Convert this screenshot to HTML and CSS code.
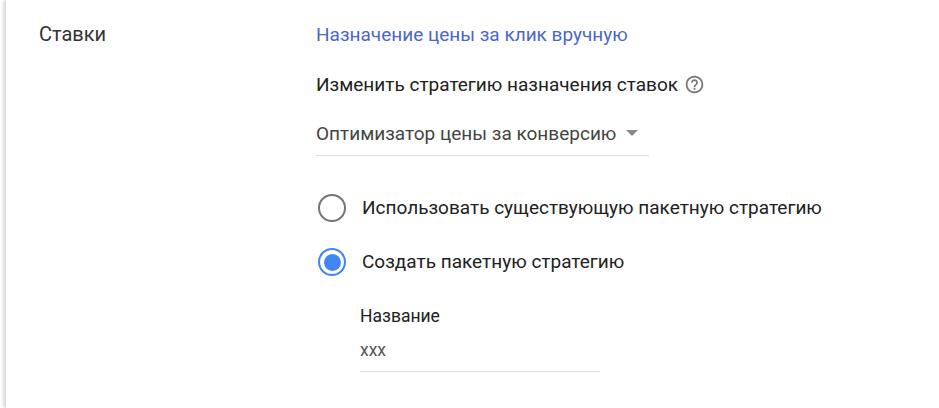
FILE: index.html
```html
<!DOCTYPE html>
<html lang="ru">
<head>
  <meta charset="UTF-8">
  <title>Ставки</title>
  <link rel="stylesheet" href="styles.css">
</head>
<body>
  <div class="page">
    <div class="section-title">Ставки</div>
    <div class="section-body">
      <a class="current-strategy">Назначение цены за клик вручную</a>

      <div class="change-row">
        <span>Изменить стратегию назначения ставок</span>
        <svg class="help-icon" width="21" height="21" viewBox="0 0 24 24">
          <path fill="#757575" d="M11 18h2v-2h-2v2zm1-16C6.48 2 2 6.48 2 12s4.48 10 10 10 10-4.48 10-10S17.52 2 12 2zm0 18c-4.41 0-8-3.59-8-8s3.59-8 8-8 8 3.59 8 8-3.59 8-8 8zm0-14c-2.21 0-4 1.79-4 4h2c0-1.1.9-2 2-2s2 .9 2 2c0 2-3 1.75-3 5h2c0-2.25 3-2.5 3-5 0-2.21-1.79-4-4-4z"/>
        </svg>
      </div>

      <div class="dropdown">
        <span>Оптимизатор цены за конверсию</span>
        <span class="dropdown-arrow"></span>
      </div>

      <div class="radio-row first">
        <span class="radio"></span>
        <span class="radio-label">Использовать существующую пакетную стратегию</span>
      </div>
      <div class="radio-row">
        <span class="radio checked"></span>
        <span class="radio-label">Создать пакетную стратегию</span>
      </div>

      <div class="name-field">
        <div class="name-label">Название</div>
        <div class="name-input">xxx</div>
      </div>
    </div>
  </div>
</body>
</html>
```

FILE: styles.css
```css
html, body {
  margin: 0;
  padding: 0;
  height: 100%;
}
body {
  background: #ffffff;
  font-family: Roboto, "Liberation Sans", sans-serif;
  font-size: 19px;
  color: #212121;
  overflow: hidden;
}
.page {
  display: flex;
  height: 408px;
  box-sizing: border-box;
  margin-left: 6px;
  padding: 24px 0 0 33px;
  box-shadow: -3px 0 3px #dcdcdc;
}
.section-title {
  width: 277px;
  line-height: 20px;
  font-size: 20px;
  color: #333333;
}
.section-body {
  display: flex;
  flex-direction: column;
  align-items: flex-start;
}
.current-strategy {
  margin-top: 1px;
  line-height: 20px;
  color: #4a67c9;
}
.change-row {
  display: flex;
  align-items: center;
  gap: 6px;
  margin-top: 29px;
  line-height: 20px;
}
.dropdown {
  display: flex;
  align-items: center;
  width: 333px;
  height: 36px;
  margin-top: 20px;
  padding-bottom: 4px;
  border-bottom: 1px solid #e0e0e0;
  color: #444444;
}
.dropdown-arrow {
  width: 0;
  height: 0;
  margin-left: 10px;
  border-left: 6.5px solid transparent;
  border-right: 6.5px solid transparent;
  border-top: 6px solid #8a8a8a;
}
.radio-row {
  display: flex;
  align-items: center;
  gap: 16px;
  height: 28px;
  margin-top: 26px;
  margin-left: 2px;
}
.radio-row.first {
  margin-top: 38px;
}
.radio-label {
  padding-bottom: 2px;
}
.radio {
  width: 28px;
  height: 28px;
  box-sizing: border-box;
  border: 2.5px solid #757575;
  border-radius: 50%;
  background: #ffffff;
}
.radio.checked {
  border-color: #4285f4;
  padding: 3.5px;
  background: #4285f4 content-box;
}
.name-field {
  width: 240px;
  margin-top: 30px;
  margin-left: 44px;
}
.name-label {
  line-height: 20px;
  font-size: 17.5px;
}
.name-input {
  height: 39px;
  line-height: 35px;
  margin-top: 7px;
  box-sizing: border-box;
  font-size: 17.5px;
  color: #555555;
  border-bottom: 1px solid #e0e0e0;
}
```
